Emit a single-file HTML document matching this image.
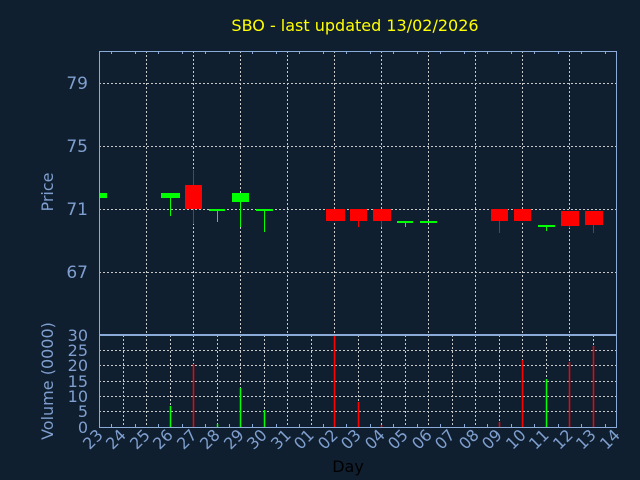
<!DOCTYPE html>
<html><head><meta charset="utf-8"><style>
html,body{margin:0;padding:0;background:#101f30;}
svg{display:block;font-family:"DejaVu Sans","Liberation Sans",sans-serif;}
</style></head><body>
<svg width="640" height="480" viewBox="0 0 640 480" xmlns="http://www.w3.org/2000/svg">
<rect width="640" height="480" fill="#101f30"/>
<text x="355" y="31" fill="#ffff00" font-size="16" text-anchor="middle">SBO - last updated 13/02/2026</text>
<g stroke="#c8c8c8" stroke-dasharray="2,2" stroke-width="1">
<line x1="99" y1="83.5" x2="617" y2="83.5"/><line x1="99" y1="146.5" x2="617" y2="146.5"/>
<line x1="99" y1="209.5" x2="617" y2="209.5"/><line x1="99" y1="272.5" x2="617" y2="272.5"/>
<line x1="146.5" y1="51" x2="146.5" y2="334"/><line x1="193.5" y1="51" x2="193.5" y2="334"/>
<line x1="240.5" y1="51" x2="240.5" y2="334"/><line x1="287.5" y1="51" x2="287.5" y2="334"/>
<line x1="334.5" y1="51" x2="334.5" y2="334"/><line x1="381.5" y1="51" x2="381.5" y2="334"/>
<line x1="428.5" y1="51" x2="428.5" y2="334"/><line x1="475.5" y1="51" x2="475.5" y2="334"/>
<line x1="522.5" y1="51" x2="522.5" y2="334"/><line x1="569.5" y1="51" x2="569.5" y2="334"/>
</g>
<g stroke="#c8c8c8" stroke-dasharray="2,2" stroke-width="1">
<line x1="99" y1="350.5" x2="617" y2="350.5"/><line x1="99" y1="365.5" x2="617" y2="365.5"/>
<line x1="99" y1="381.5" x2="617" y2="381.5"/><line x1="99" y1="396.5" x2="617" y2="396.5"/>
<line x1="99" y1="411.5" x2="617" y2="411.5"/>
<line x1="123.5" y1="335" x2="123.5" y2="427"/><line x1="146.5" y1="335" x2="146.5" y2="427"/>
<line x1="170.5" y1="335" x2="170.5" y2="427"/><line x1="193.5" y1="335" x2="193.5" y2="427"/>
<line x1="217.5" y1="335" x2="217.5" y2="427"/><line x1="240.5" y1="335" x2="240.5" y2="427"/>
<line x1="264.5" y1="335" x2="264.5" y2="427"/><line x1="287.5" y1="335" x2="287.5" y2="427"/>
<line x1="311.5" y1="335" x2="311.5" y2="427"/><line x1="334.5" y1="335" x2="334.5" y2="427"/>
<line x1="358.5" y1="335" x2="358.5" y2="427"/><line x1="381.5" y1="335" x2="381.5" y2="427"/>
<line x1="405.5" y1="335" x2="405.5" y2="427"/><line x1="428.5" y1="335" x2="428.5" y2="427"/>
<line x1="452.5" y1="335" x2="452.5" y2="427"/><line x1="475.5" y1="335" x2="475.5" y2="427"/>
<line x1="499.5" y1="335" x2="499.5" y2="427"/><line x1="522.5" y1="335" x2="522.5" y2="427"/>
<line x1="546.5" y1="335" x2="546.5" y2="427"/><line x1="569.5" y1="335" x2="569.5" y2="427"/>
<line x1="593.5" y1="335" x2="593.5" y2="427"/>
</g>
<g>
<rect x="99" y="193" width="8" height="5" fill="#00ff00"/>
<line x1="170.5" y1="198" x2="170.5" y2="216" stroke="#00ff00"/><rect x="161" y="193" width="19" height="5" fill="#00ff00"/>
<line x1="193.5" y1="170" x2="193.5" y2="224" stroke="#ff0000"/><rect x="185" y="185" width="17" height="24" fill="#ff0000"/>
<line x1="217.5" y1="210" x2="217.5" y2="222" stroke="#00ff00"/><rect x="209" y="209" width="16" height="2" fill="#00ff00"/>
<line x1="240.5" y1="200" x2="240.5" y2="227" stroke="#00ff00"/><rect x="232" y="193" width="17" height="9" fill="#00ff00"/>
<line x1="264.5" y1="210" x2="264.5" y2="232" stroke="#00ff00"/><rect x="256" y="209" width="17" height="2" fill="#00ff00"/>
<rect x="326" y="209" width="19" height="12" fill="#ff0000"/>
<line x1="358.5" y1="215" x2="358.5" y2="227" stroke="#ff0000"/><rect x="350" y="209" width="17" height="12" fill="#ff0000"/>
<line x1="381.5" y1="215" x2="381.5" y2="227" stroke="#ff0000"/><rect x="373" y="209" width="18" height="12" fill="#ff0000"/>
<line x1="405.5" y1="222" x2="405.5" y2="227" stroke="#00ff00"/><rect x="397" y="221" width="16" height="2" fill="#00ff00"/>
<rect x="420" y="221" width="17" height="2" fill="#00ff00"/>
<line x1="499.5" y1="215" x2="499.5" y2="233" stroke="#ff0000"/><rect x="491" y="209" width="17" height="12" fill="#ff0000"/>
<rect x="514" y="209" width="17" height="12" fill="#ff0000"/>
<line x1="546.5" y1="226" x2="546.5" y2="231" stroke="#00ff00"/><rect x="538" y="225" width="17" height="2" fill="#00ff00"/>
<line x1="569.5" y1="220" x2="569.5" y2="228" stroke="#ff0000"/><rect x="561" y="211" width="18" height="15" fill="#ff0000"/>
<line x1="593.5" y1="220" x2="593.5" y2="233" stroke="#ff0000"/><rect x="585" y="211" width="18" height="14" fill="#ff0000"/>
</g>
<g stroke-width="1.5">
<line x1="170.5" y1="406" x2="170.5" y2="427" stroke="#00ff00"/>
<line x1="193.5" y1="364" x2="193.5" y2="427" stroke="#ff0000"/>
<line x1="217.5" y1="424" x2="217.5" y2="427" stroke="#00ff00"/>
<line x1="240.5" y1="388" x2="240.5" y2="427" stroke="#00ff00"/>
<line x1="264.5" y1="410" x2="264.5" y2="427" stroke="#00ff00"/>
<line x1="334.5" y1="335" x2="334.5" y2="427" stroke="#ff0000"/>
<line x1="358.5" y1="402" x2="358.5" y2="427" stroke="#ff0000"/>
<line x1="381.5" y1="425" x2="381.5" y2="427" stroke="#ff0000"/>
<line x1="499.5" y1="422" x2="499.5" y2="427" stroke="#ff0000"/>
<line x1="522.5" y1="360" x2="522.5" y2="427" stroke="#ff0000"/>
<line x1="546.5" y1="379" x2="546.5" y2="427" stroke="#00ff00"/>
<line x1="569.5" y1="362" x2="569.5" y2="427" stroke="#ff0000"/>
<line x1="593.5" y1="346" x2="593.5" y2="427" stroke="#ff0000"/>
</g>
<g stroke="#8aaad8" fill="none" stroke-width="1">
<rect x="99.5" y="51.5" width="517" height="283"/>
<rect x="99.5" y="335.5" width="517" height="92"/>
<path d="M111.5 51v3M135.5 51v3M158.5 51v3M182.5 51v3M205.5 51v3M229.5 51v3M252.5 51v3M276.5 51v3M299.5 51v3M323.5 51v3M346.5 51v3M370.5 51v3M393.5 51v3M417.5 51v3M440.5 51v3M464.5 51v3M487.5 51v3M511.5 51v3M534.5 51v3M558.5 51v3M581.5 51v3M605.5 51v3"/>
<path d="M111.5 427v-3M135.5 427v-3M158.5 427v-3M182.5 427v-3M205.5 427v-3M229.5 427v-3M252.5 427v-3M276.5 427v-3M299.5 427v-3M323.5 427v-3M346.5 427v-3M370.5 427v-3M393.5 427v-3M417.5 427v-3M440.5 427v-3M464.5 427v-3M487.5 427v-3M511.5 427v-3M534.5 427v-3M558.5 427v-3M581.5 427v-3M605.5 427v-3"/>
</g>
<g fill="#7f9fcf" font-size="17" text-anchor="end">
<text x="88" y="89">79</text><text x="88" y="152">75</text><text x="88" y="215">71</text><text x="88" y="278">67</text>
</g>
<g fill="#7f9fcf" font-size="16" text-anchor="end">
<text x="88" y="341">30</text><text x="88" y="356">25</text><text x="88" y="371">20</text>
<text x="88" y="387">15</text><text x="88" y="402">10</text><text x="88" y="417">5</text><text x="88" y="433">0</text>
</g>
<text transform="translate(53,192) rotate(-90)" fill="#7f9fcf" font-size="16" text-anchor="middle">Price</text>
<text transform="translate(53,381) rotate(-90)" fill="#7f9fcf" font-size="16" text-anchor="middle">Volume (0000)</text>
<g fill="#7f9fcf" font-size="16" text-anchor="end">
<text transform="translate(104,436) rotate(-45)">23</text>
<text transform="translate(127,436) rotate(-45)">24</text>
<text transform="translate(151,436) rotate(-45)">25</text>
<text transform="translate(174,436) rotate(-45)">26</text>
<text transform="translate(198,436) rotate(-45)">27</text>
<text transform="translate(221,436) rotate(-45)">28</text>
<text transform="translate(245,436) rotate(-45)">29</text>
<text transform="translate(268,436) rotate(-45)">30</text>
<text transform="translate(292,436) rotate(-45)">31</text>
<text transform="translate(315,436) rotate(-45)">01</text>
<text transform="translate(339,436) rotate(-45)">02</text>
<text transform="translate(362,436) rotate(-45)">03</text>
<text transform="translate(386,436) rotate(-45)">04</text>
<text transform="translate(409,436) rotate(-45)">05</text>
<text transform="translate(433,436) rotate(-45)">06</text>
<text transform="translate(456,436) rotate(-45)">07</text>
<text transform="translate(480,436) rotate(-45)">08</text>
<text transform="translate(503,436) rotate(-45)">09</text>
<text transform="translate(527,436) rotate(-45)">10</text>
<text transform="translate(550,436) rotate(-45)">11</text>
<text transform="translate(574,436) rotate(-45)">12</text>
<text transform="translate(597,436) rotate(-45)">13</text>
<text transform="translate(621,436) rotate(-45)">14</text>
</g>
<text x="348" y="472" fill="#000000" font-size="16" text-anchor="middle">Day</text>
</svg>
</body></html>
